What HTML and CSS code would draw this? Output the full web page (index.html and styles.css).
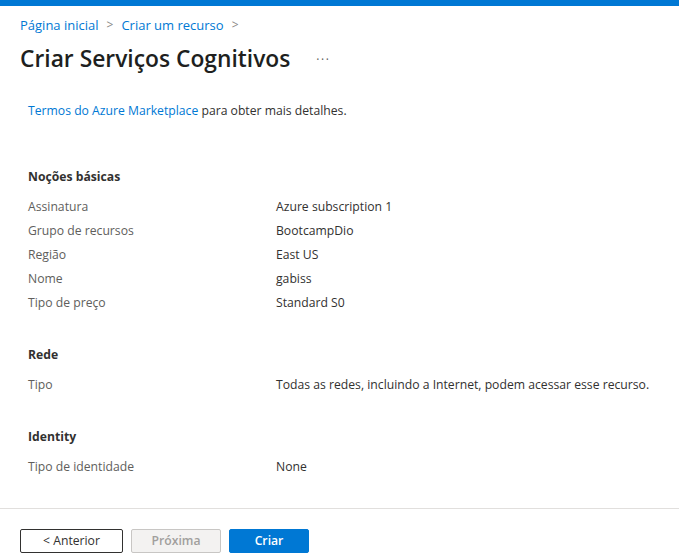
FILE: index.html
```html
<!DOCTYPE html>
<html lang="pt-BR">
<head>
<meta charset="utf-8">
<title>Criar Serviços Cognitivos</title>
<link rel="stylesheet" href="styles.css">
</head>
<body>
<div class="page">
  <div class="topbar"></div>
  <header class="header">
    <nav class="crumbs">
      <a class="crumb" href="#">Página inicial</a>
      <span class="sep">&gt;</span>
      <a class="crumb" href="#">Criar um recurso</a>
      <span class="sep">&gt;</span>
    </nav>
    <div class="title-row">
      <h1 class="title">Criar Serviços Cognitivos</h1>
      <span class="more">···</span>
    </div>
  </header>
  <main class="content">
    <p class="terms"><a href="#" class="link">Termos do Azure Marketplace</a> para obter mais detalhes.</p>

    <section class="section">
      <h2 class="sec-title">Noções básicas</h2>
      <div class="row"><span class="label">Assinatura</span><span class="value">Azure subscription 1</span></div>
      <div class="row"><span class="label">Grupo de recursos</span><span class="value">BootcampDio</span></div>
      <div class="row"><span class="label">Região</span><span class="value">East US</span></div>
      <div class="row"><span class="label">Nome</span><span class="value">gabiss</span></div>
      <div class="row"><span class="label">Tipo de preço</span><span class="value">Standard S0</span></div>
    </section>

    <section class="section">
      <h2 class="sec-title">Rede</h2>
      <div class="row"><span class="label">Tipo</span><span class="value">Todas as redes, incluindo a Internet, podem acessar esse recurso.</span></div>
    </section>

    <section class="section">
      <h2 class="sec-title">Identity</h2>
      <div class="row"><span class="label">Tipo de identidade</span><span class="value">None</span></div>
    </section>
  </main>
  <footer class="footer">
    <button class="btn btn-prev">&lt; Anterior</button>
    <button class="btn btn-next" disabled>Próxima</button>
    <button class="btn btn-create">Criar</button>
  </footer>
</div>
</body>
</html>
```
FILE: styles.css
```css
html, body {
  margin: 0;
  padding: 0;
  background: #ffffff;
}
body {
  font-family: "Open Sans", "Noto Sans", "Liberation Sans", sans-serif;
  font-size: 12.2px;
  color: #323130;
}
.page {
  width: 679px;
  height: 560px;
  display: flex;
  flex-direction: column;
  overflow: hidden;
}
.topbar {
  height: 6px;
  background: #0078d4;
  flex: none;
}
.header {
  padding: 9px 20px 0 20px;
}
.crumbs {
  display: flex;
  align-items: center;
  gap: 8px;
  height: 20px;
  line-height: 20px;
  font-size: 13px;
}
.crumb {
  color: #0078d4;
  text-decoration: none;
}
.sep {
  color: #8a8886;
  font-size: 12px;
}
.title-row {
  display: flex;
  align-items: center;
  margin-top: 8px;
  height: 32px;
}
.title {
  margin: 0;
  font-size: 22.8px;
  font-weight: 600;
  line-height: 32px;
  color: #201f1e;
}
.more {
  margin-left: 26px;
  color: #605e5c;
  font-size: 12px;
  letter-spacing: 1.5px;
}
.content {
  flex: 1;
  padding: 26px 28px 0 28px;
}
.terms {
  margin: 0;
  line-height: 20px;
}
.link {
  color: #0078d4;
  text-decoration: none;
}
.section {
  margin-top: 46px;
}
.section + .section {
  margin-top: 30px;
}
.sec-title {
  margin: 0 0 8px 0;
  font-size: 12.2px;
  font-weight: 700;
  line-height: 20px;
  color: #323130;
}
.row {
  display: grid;
  grid-template-columns: 248px 1fr;
  line-height: 24px;
  height: 24px;
  white-space: nowrap;
}
.label {
  color: #605e5c;
}
.value {
  color: #323130;
}
.footer {
  flex: none;
  border-top: 1px solid #e1dfdd;
  height: 52px;
  box-sizing: border-box;
  padding: 20px 20px 0 20px;
  display: flex;
  gap: 8px;
  align-items: flex-start;
}
.btn {
  height: 24px;
  box-sizing: border-box;
  border-radius: 2px;
  font-family: inherit;
  font-size: 12.2px;
  padding: 0;
  line-height: 22px;
}
.btn-prev {
  width: 103px;
  background: #ffffff;
  border: 1px solid #323130;
  color: #323130;
}
.btn-next {
  width: 90px;
  background: #f3f2f1;
  border: 1px solid #c8c6c4;
  color: #a19f9d;
  font-weight: 600;
}
.btn-create {
  width: 80px;
  background: #0078d4;
  border: 1px solid #0078d4;
  color: #ffffff;
  font-weight: 600;
}
```
